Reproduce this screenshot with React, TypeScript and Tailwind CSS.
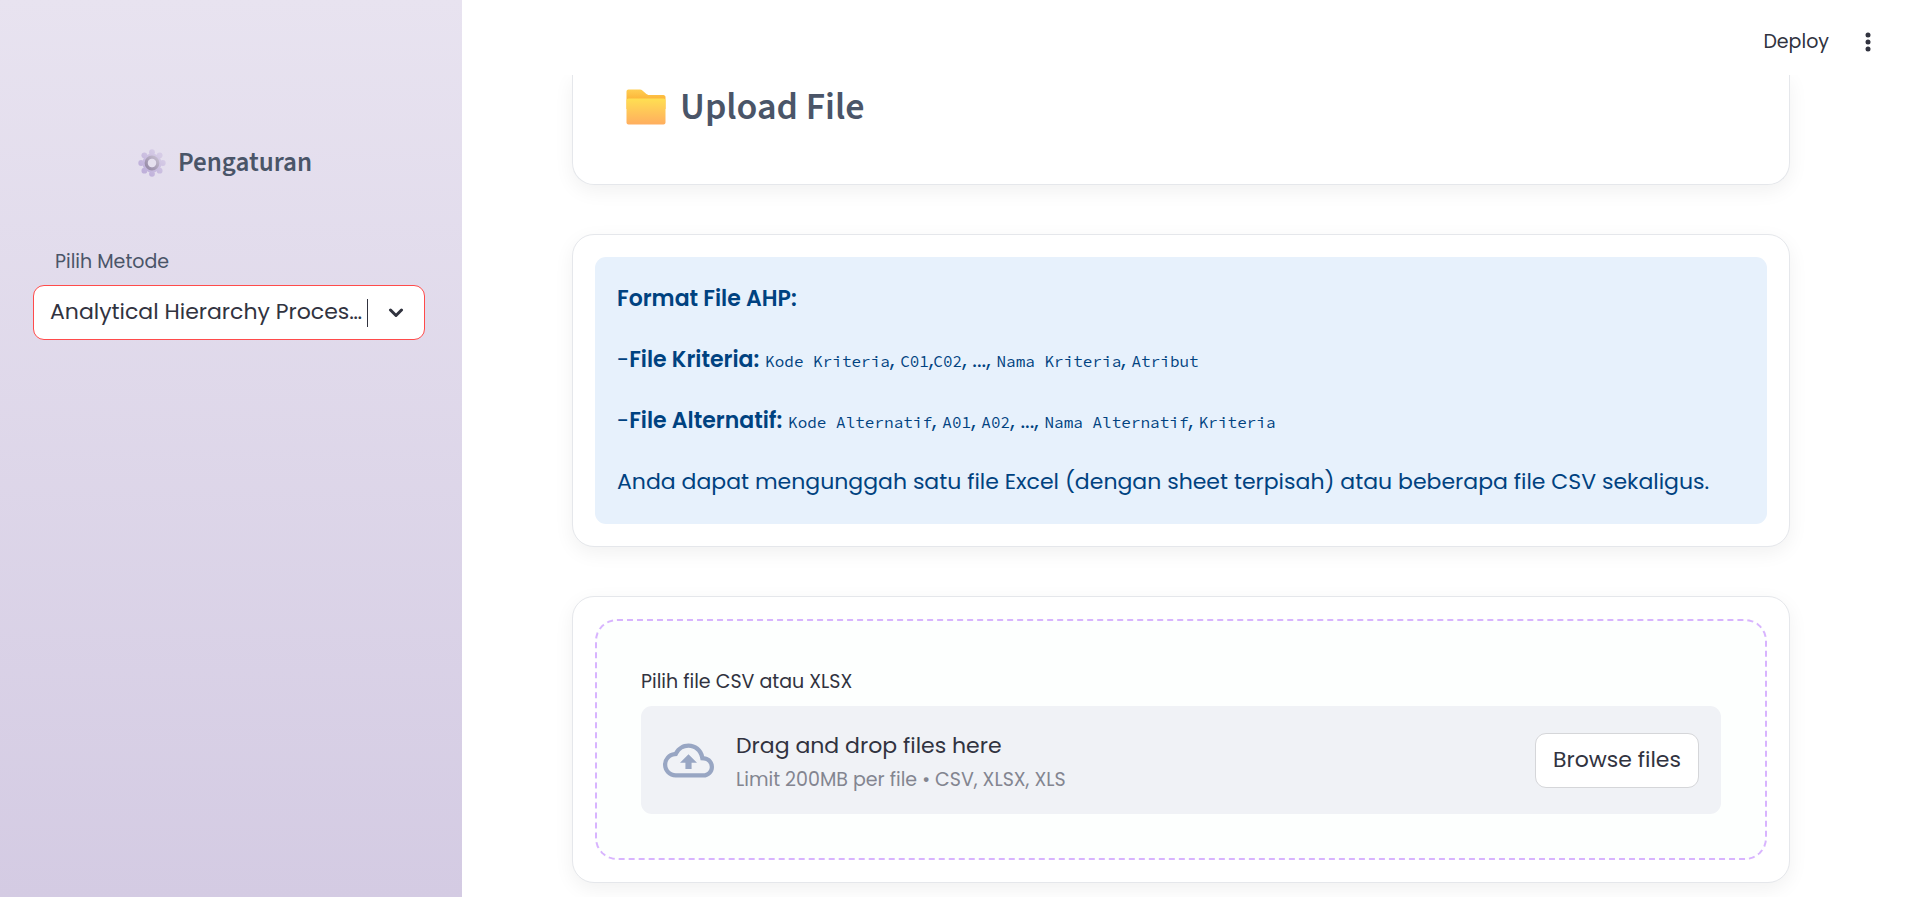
import type { ReactNode } from "react";

function GearIcon() {
  const teeth = [0, 45, 90, 135, 180, 225, 270, 315];
  return (
    <svg viewBox="0 0 28 28" className="size-7" aria-hidden="true">
      <defs>
        <linearGradient id="tooth" gradientUnits="userSpaceOnUse" x1="6" y1="22" x2="22" y2="6">
          <stop offset="0" stopColor="#bfb0da" />
          <stop offset="1" stopColor="#d6cce6" />
        </linearGradient>
        <linearGradient id="ring" x1="1" y1="0" x2="0" y2="1">
          <stop offset="0" stopColor="#c6bed0" />
          <stop offset="1" stopColor="#9488a4" />
        </linearGradient>
      </defs>
      <g fill="url(#tooth)">
        {teeth.map((a) => {
          const r = (a * Math.PI) / 180;
          return <circle key={a} cx={14 + 10.8 * Math.cos(r)} cy={14 + 10.8 * Math.sin(r)} r="2.9" />;
        })}
        <circle cx="14" cy="14" r="9.6" />
      </g>
      <circle cx="14" cy="14" r="5.8" fill="none" stroke="url(#ring)" strokeWidth="3.2" />
      <circle cx="14" cy="14" r="4.2" fill="#e5e0ee" />
    </svg>
  );
}

function FolderIcon() {
  return (
    <svg viewBox="0 0 40 36" className="h-9 w-10" aria-hidden="true">
      <defs>
        <linearGradient id="back" x1="0" y1="0" x2="0" y2="1">
          <stop offset="0" stopColor="#ffce52" />
          <stop offset="0.5" stopColor="#fcb53a" />
        </linearGradient>
        <linearGradient id="front" x1="0" y1="0" x2="0" y2="1">
          <stop offset="0" stopColor="#ffdf52" />
          <stop offset="1" stopColor="#ffae5f" />
        </linearGradient>
      </defs>
      <path d="M2.5 .5H14c1 0 1.7.3 2.4 1l4 3.6c.6.5 1.2.8 2 .8h15.1c1 0 2 1 2 2V20H.5V2.500c0-1.100.9-2 2-2z" fill="url(#back)" />
      <path d="M2.500 9.500h35c1.100 0 2 .9 2 2v22c0 1.100-.9 2-2 2h-35c-1.100 0-2-.9-2-2v-22c0-1.100.9-2 2-2z" fill="url(#front)" />
    </svg>
  );
}

function CloudUploadIcon() {
  return (
    <svg viewBox="0 0 24 24" className="size-[51px] shrink-0" fill="#98a6c3" aria-hidden="true">
      <path d="M19.350 10.040A7.490 7.490 0 0 0 12 4C9.110 4 6.600 5.640 5.350 8.040A5.994 5.994 0 0 0 0 14c0 3.310 2.690 6 6 6h13c2.760 0 5-2.240 5-5 0-2.640-2.050-4.780-4.650-4.960zM19 18H6c-2.210 0-4-1.790-4-4 0-2.050 1.530-3.760 3.560-3.970l1.070-.11.500-.95A5.469 5.469 0 0 1 12 6c2.620 0 4.880 1.860 5.390 4.430l.3 1.500 1.530.11A2.980 2.980 0 0 1 22 15c0 1.650-1.350 3-3 3zM8 13h2.550v3h2.900v-3H16l-4-4-4 4z" />
    </svg>
  );
}

function Card({ children }: { children: ReactNode }) {
  return (
    <section className="rounded-[22px] border border-[#e5e7eb] bg-white p-[22px] shadow-[0_6px_20px_rgba(0,0,0,0.06)]">
      {children}
    </section>
  );
}

function Code({ children }: { children: ReactNode }) {
  return <code className="font-['Source_Code_Pro','Liberation_Mono',monospace] text-[16px] leading-none">{children}</code>;
}

export default function App() {
  return (
    <div className="flex min-h-screen bg-white font-['Poppins','Inter',sans-serif] text-[22px] text-[#31333f]">
      <aside className="flex w-[462px] shrink-0 flex-col bg-linear-to-b from-[#e8e3f0] to-[#d4cbe3] pt-[143px] pr-[37px] pl-[33px]">
        <h2 className="flex items-center justify-center gap-3 pr-2 font-['Source_Sans_3','Source_Sans_Pro','Noto_Sans_CJK_SC',sans-serif] text-[27px] leading-10 font-semibold text-[#4a5568]">
          <GearIcon />
          Pengaturan
        </h2>
        <label htmlFor="metode" className="mt-[63px] pl-[22px] text-[19px] leading-8 text-[#4a5568]">
          Pilih Metode
        </label>
        <div className="mt-[7px] flex h-[55px] items-center rounded-[11px] border border-[#ff4b4b] bg-white pr-5 pl-4">
          <select id="metode" className="h-[38px] w-[317px] appearance-none truncate bg-transparent pb-[2px] outline-none">
            <option>Analytical Hierarchy Process (AHP)</option>
          </select>
          <span className="h-7 w-px bg-[#31333f]" />
          <svg viewBox="0 0 16 10" className="ml-auto h-[10px] w-4" fill="none" stroke="#31333f" strokeWidth="3" strokeLinecap="round" strokeLinejoin="round" aria-hidden="true">
            <path d="M2.500 2L8 7.500 13.500 2" />
          </svg>
        </div>
      </aside>

      <main className="flex min-w-0 grow flex-col">
        <header className="flex h-[75px] items-center justify-end gap-[29px] bg-white pt-[9px] pr-[41px]">
          <button type="button" className="text-[19px]">Deploy</button>
          <button type="button" aria-label="Menu" className="flex w-5 justify-center">
            <svg viewBox="0 0 6 20" className="h-5 w-[6px]" fill="#31333f" aria-hidden="true">
              <circle cx="3" cy="3" r="2.500" />
              <circle cx="3" cy="10" r="2.500" />
              <circle cx="3" cy="17" r="2.500" />
            </svg>
          </button>
        </header>

        <div className="flex grow flex-col gap-[49px] overflow-hidden pr-[129px] pl-[110px]">
          <section className="flex h-[110px] items-start rounded-b-[22px] border border-t-0 border-[#e5e7eb] bg-white px-[53px] shadow-[0_6px_20px_rgba(0,0,0,0.06)]">
            <h1 className="flex items-center gap-[14px] pt-[5px] font-['Source_Sans_3','Source_Sans_Pro','Noto_Sans_CJK_SC',sans-serif] text-[38px] leading-[54px] font-semibold text-[#4a5568]">
              <FolderIcon />
              Upload File
            </h1>
          </section>

          <Card>
            <div className="flex flex-col gap-[21px] rounded-[11px] bg-[#e7f1fc] px-[22px] py-[22px] leading-10 text-[#004280]">
              <p className="font-semibold">Format File AHP:</p>
              <p>
                -<strong className="font-semibold">File Kriteria:</strong>{" "}
                <Code>Kode Kriteria</Code>, <Code>C01</Code>,<Code>C02</Code>, ..., <Code>Nama Kriteria</Code>, <Code>Atribut</Code>
              </p>
              <p>
                -<strong className="font-semibold">File Alternatif:</strong>{" "}
                <Code>Kode Alternatif</Code>, <Code>A01</Code>, <Code>A02</Code>, ..., <Code>Nama Alternatif</Code>, <Code>Kriteria</Code>
              </p>
              <p>Anda dapat mengunggah satu file Excel (dengan sheet terpisah) atau beberapa file CSV sekaligus.</p>
            </div>
          </Card>

          <Card>
            <div className="rounded-[22px] border-2 border-dashed border-[#d8b4fe] bg-[#fdfffe] p-11">
              <p id="upload-label" className="mb-2 text-[19px] leading-[33px]">Pilih file CSV atau XLSX</p>
              <div role="group" aria-labelledby="upload-label" className="flex h-[108px] items-center rounded-[11px] bg-[#f0f2f6] px-[22px]">
                <CloudUploadIcon />
                <div className="ml-[22px] flex flex-col gap-px pt-[3px]">
                  <p className="leading-[35px]">Drag and drop files here</p>
                  <p className="text-[19px] leading-[31px] text-[#838590]">Limit 200MB per file • CSV, XLSX, XLS</p>
                </div>
                <button type="button" className="ml-auto h-[55px] rounded-[11px] border border-[#d5d6d9] bg-white px-[17px] pb-[2px]">Browse files</button>
              </div>
            </div>
          </Card>
        </div>
      </main>
    </div>
  );
}
